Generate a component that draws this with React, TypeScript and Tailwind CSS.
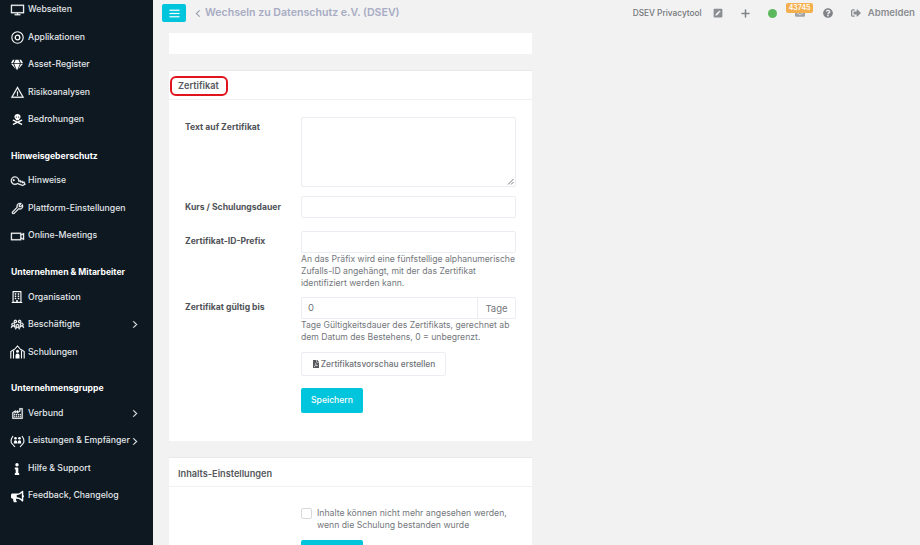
import React from "react";
import { LiaDesktopSolid, LiaExclamationTriangleSolid, LiaKeySolid, LiaWrenchSolid, LiaVideoSolid, LiaUsersSolid, LiaIndustrySolid, LiaAngleRightSolid, LiaAngleLeftSolid, LiaBarsSolid, LiaPlusSolid } from "react-icons/lia";
import { FaEnvelope, FaQuestionCircle, FaFilePdf, FaPenSquare, FaGem, FaInfo, FaBullhorn, FaRegBuilding, FaSkullCrossbones, FaSignOutAlt } from "react-icons/fa";

type Item = { label: string; icon: React.ReactNode; arrow?: boolean };

const ic = "text-[15px] text-white";
const th = { stroke: "currentColor", strokeWidth: 0.6 };

function Disc() {
  return (
    <svg width="13" height="13" viewBox="0 0 13 13" fill="none" stroke="white">
      <circle cx="6.5" cy="6.5" r="5.7" strokeWidth="1.1" />
      <circle cx="6.5" cy="6.5" r="2.3" strokeWidth="1.3" />
    </svg>
  );
}

function SchoolIcon() {
  return (
    <svg width="15" height="14" viewBox="0 0 15 14" fill="none" stroke="white" strokeWidth="1.1">
      <path d="M.8 13.5V6.5L4 4.5M14.2 13.5V6.5L11 4.5M3.5 13.5V6M11.5 13.5V6M3.5 5.5 7.5 1l4 4.5" />
      <circle cx="7.5" cy="6.3" r="1.5" fill="white" stroke="none" />
      <path d="M5.5 13.5V10.5Q5.5 8.6 7.5 8.6T9.5 10.5V13.5" fill="white" stroke="none" />
    </svg>
  );
}

function PeopleHands() {
  return (
    <svg width="15" height="13" viewBox="0 0 15 13" fill="none" stroke="white" strokeWidth="1.1">
      <path d="M3 1Q.2 5 1.5 8L5 12M12 1Q14.8 5 13.5 8L10 12" />
      <circle cx="5.5" cy="3.3" r="1.3" fill="white" stroke="none" />
      <circle cx="9.5" cy="3.3" r="1.3" fill="white" stroke="none" />
      <path d="M3.8 8.5Q3.8 5.3 5.5 5.3T7.3 8.5ZM7.7 8.5Q7.7 5.3 9.5 5.3T11.2 8.5Z" fill="white" stroke="none" />
    </svg>
  );
}

function Row({ label, icon, arrow }: Item) {
  return (
    <div className="h-[27.5px] flex items-center pl-[8px] pr-[14px] text-[#e4e7ea]">
      <span className="w-[18px] flex justify-center shrink-0">{icon}</span>
      <span className="ml-[2px] text-[8.7px] whitespace-nowrap font-medium">{label}</span>
      {arrow && <LiaAngleRightSolid className="ml-auto text-[9px] text-white" {...th} strokeWidth={2} />}
    </div>
  );
}

function Head({ label }: { label: string }) {
  return <div className="h-[33.75px] pt-[13px] pl-[11px] text-[8.6px] leading-[19px] font-bold text-white whitespace-nowrap">{label}</div>;
}

function Label({ children }: { children: React.ReactNode }) {
  return <div className="w-[116px] shrink-0 text-[8.6px] leading-[13px] font-bold text-[#4f5358] whitespace-nowrap">{children}</div>;
}

function Hint({ children }: { children: React.ReactNode }) {
  return <p className="text-[8.65px] leading-[12px] text-[#74777c] whitespace-nowrap">{children}</p>;
}

const inputCls = "h-[22px] w-full bg-white border border-[#ebedf2] rounded-[2px]";

export default function App() {
  return (
    <div className="flex h-[545px] w-[920px] overflow-hidden bg-[#f2f2f2] font-['Inter','Liberation_Sans',sans-serif]">
      <aside className="w-[153px] shrink-0 bg-[#0d1821] overflow-hidden">
        <div className="-mt-[4px]">
          <Row label="Webseiten" icon={<LiaDesktopSolid className={ic} {...th} />} />
          <Row label="Applikationen" icon={<Disc />} />
          <Row label="Asset-Register" icon={<FaGem className="text-[12px] text-white" />} />
          <Row label="Risikoanalysen" icon={<LiaExclamationTriangleSolid className={ic} {...th} />} />
          <Row label="Bedrohungen" icon={<FaSkullCrossbones className="text-[11px] text-white" />} />
          <Head label="Hinweisgeberschutz" />
          <Row label="Hinweise" icon={<LiaKeySolid className={ic + " -rotate-[115deg]"} {...th} />} />
          <Row label="Plattform-Einstellungen" icon={<LiaWrenchSolid className={ic} {...th} />} />
          <Row label="Online-Meetings" icon={<LiaVideoSolid className={ic} {...th} />} />
          <Head label="Unternehmen & Mitarbeiter" />
          <Row label="Organisation" icon={<FaRegBuilding className="text-[12px] text-white" />} />
          <Row label="Beschäftigte" icon={<LiaUsersSolid className={ic} {...th} />} arrow />
          <Row label="Schulungen" icon={<SchoolIcon />} />
          <Head label="Unternehmensgruppe" />
          <Row label="Verbund" icon={<LiaIndustrySolid className={ic} {...th} />} arrow />
          <Row label="Leistungen & Empfänger" icon={<PeopleHands />} arrow />
          <Row label="Hilfe & Support" icon={<FaInfo className="text-[12px] text-white" />} />
          <Row label="Feedback, Changelog" icon={<FaBullhorn className="text-[13px] text-white" />} />
        </div>
      </aside>

      <main className="flex-1 min-w-0 flex flex-col">
        <header className="h-[33px] shrink-0 flex items-center pb-[7px] pl-[9px] pr-[5px] bg-[#f2f2f2]">
          <div className="w-[24px] h-[18px] rounded-[2px] bg-[#00c5dc] flex items-center justify-center">
            <LiaBarsSolid className="text-[13px] text-white" {...th} />
          </div>
          <LiaAngleLeftSolid className="ml-[8px] text-[9px] text-[#8d93a5]" {...th} strokeWidth={2} />
          <span className="ml-[2px] text-[10.6px] font-semibold text-[#a7abc3] whitespace-nowrap">Wechseln zu Datenschutz e.V. (DSEV)</span>
          <span className="ml-auto text-[8.3px] font-medium text-[#74777c] whitespace-nowrap">DSEV Privacytool</span>
          <FaPenSquare className="ml-[11px] text-[10px] text-[#8a8d91]" />
          <LiaPlusSolid className="ml-[17px] text-[11px] text-[#74777c]" {...th} strokeWidth={2} />
          <span className="ml-[17px] w-[9px] h-[9px] rounded-full bg-[#5cb85c]" />
          <span className="ml-[18px] relative flex">
            <FaEnvelope className="text-[10px] text-[#a0a3a8]" />
            <span className="absolute -top-[5px] -left-[9px] h-[10px] px-[3px] rounded-[2px] bg-[#f4b04f] text-[7px] leading-[10px] font-semibold text-white">43745</span>
          </span>
          <FaQuestionCircle className="ml-[18px] text-[10px] text-[#808388]" />
          <FaSignOutAlt className="ml-[18px] text-[10px] text-[#8a8d91]" />
          <span className="ml-[7px] text-[9.6px] font-semibold text-[#8a8d91]">Abmelden</span>
        </header>

        <div className="ml-[16px] w-[363px] flex flex-col">
          <div className="h-[21px] bg-white" />

          <section className="mt-[17px] bg-white h-[370px] shadow-[0_-1px_0_#e8e8e8]">
            <div className="h-[29px] border-b border-[#f0f0f0] flex items-center pt-[2px] pl-[9px] relative">
              <span className="text-[9.2px] font-semibold text-[#55585c]">Zertifikat</span>
              <span className="absolute left-[1px] top-[5px] w-[58px] h-[20px] rounded-[6px] border-2 border-[#e0141c]" />
            </div>

            <div className="pl-[16px] pr-[16px]">
              <div className="flex mt-[17px]">
                <Label><span className="block mt-[4px]">Text auf Zertifikat</span></Label>
                <div className="w-[216px] h-[70px] border border-[#ebedf2] rounded-[2px] relative">
                  <svg className="absolute right-[1px] bottom-[1px]" width="7" height="7" viewBox="0 0 7 7"><path d="M1 6.5 6.5 1M4 6.5 6.5 4" stroke="#555" strokeWidth="0.8" /></svg>
                </div>
              </div>

              <div className="flex mt-[9px]">
                <Label><span className="block mt-[5px]">Kurs / Schulungsdauer</span></Label>
                <div className="w-[216px]"><div className={inputCls} /></div>
              </div>

              <div className="flex mt-[13px]">
                <Label><span className="block mt-[4px]">Zertifikat-ID-Prefix</span></Label>
                <div className="w-[216px]">
                  <div className={inputCls} />
                  <Hint>An das Präfix wird eine fünfstellige alphanumerische<br />Zufalls-ID angehängt, mit der das Zertifikat<br />identifiziert werden kann.</Hint>
                </div>
              </div>

              <div className="flex mt-[8px]">
                <Label><span className="block mt-[4px]">Zertifikat gültig bis</span></Label>
                <div className="w-[216px]">
                  <div className="flex h-[22px] border border-[#ebedf2] rounded-[2px]">
                    <div className="flex-1 pl-[6px] text-[9.5px] leading-[20px] text-[#74777c]">0</div>
                    <div className="w-[38px] border-l border-[#ebedf2] text-center text-[9.5px] leading-[22px] text-[#74777c]">Tage</div>
                  </div>
                  <Hint>Tage Gültigkeitsdauer des Zertifikats, gerechnet ab<br />dem Datum des Bestehens, 0 = unbegrenzt.</Hint>
                  <div className="mt-[9px] w-[145px] h-[24px] border border-[#ebedf2] rounded-[2px] flex items-center justify-center text-[8.4px] font-medium text-[#6f7277] whitespace-nowrap">
                    <FaFilePdf className="text-[8px] mr-[1px] text-[#55585c]" />Zertifikatsvorschau erstellen
                  </div>
                  <div className="mt-[12px] w-[62px] h-[25px] rounded-[2px] bg-[#00c5dc] flex items-center justify-center text-[8.6px] font-medium text-white">Speichern</div>
                </div>
              </div>
            </div>
          </section>

          <section className="mt-[17px] bg-white h-[200px] shadow-[0_-1px_0_#e8e8e8]">
            <div className="h-[29px] border-b border-[#f0f0f0] flex items-center pt-[3px] pl-[9px] text-[9.2px] font-semibold text-[#55585c]">Inhalts-Einstellungen</div>
            <div className="pl-[132px] pt-[21px]">
              <div className="flex">
                <span className="w-[11px] h-[11px] shrink-0 border border-[#d8d8d8] rounded-[2px]" />
                <p className="ml-[5px] -mt-[1px] text-[8.7px] leading-[12px] text-[#74777c] whitespace-nowrap">Inhalte können nicht mehr angesehen werden,<br />wenn die Schulung bestanden wurde</p>
              </div>
              <div className="mt-[9px] w-[62px] h-[25px] rounded-[2px] bg-[#00c5dc]" />
            </div>
          </section>
        </div>
      </main>
    </div>
  );
}
